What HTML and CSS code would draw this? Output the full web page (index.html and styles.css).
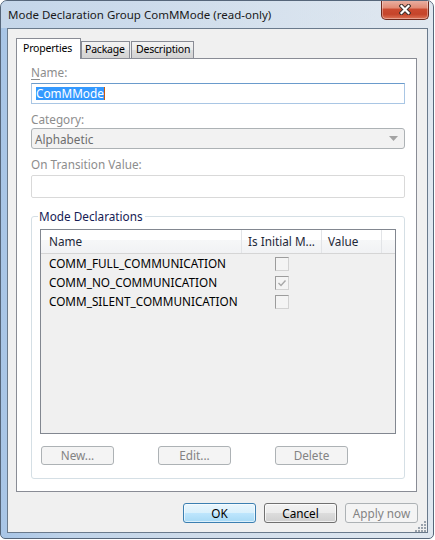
FILE: index.html
```html
<!DOCTYPE html>
<html>
<head>
<meta charset="utf-8">
<link rel="stylesheet" href="styles.css">
</head>
<body>
<div class="window">
  <div class="titlebar">
    <span class="title">Mode Declaration Group ComMMode (read-only)</span>
    <div class="close">
      <svg width="12" height="11" viewBox="0 0 12 11">
        <path d="M2.5 2 L9.5 9 M9.5 2 L2.5 9" stroke="#40302c" stroke-width="4.2" stroke-linecap="square" fill="none"/>
        <path d="M2.5 2 L9.5 9 M9.5 2 L2.5 9" stroke="#ffffff" stroke-width="2.2" stroke-linecap="square" fill="none"/>
      </svg>
    </div>
  </div>
  <div class="client">
    <div class="tabs">
      <div class="tab active">Properties</div>
      <div class="tab t-pkg">Package</div>
      <div class="tab t-desc">Description</div>
    </div>
    <div class="panel">
      <div class="lbl first"><u>N</u>ame:</div>
      <div class="input name-input"><span class="sel">ComMMode</span><span class="caret"></span></div>
      <div class="lbl">Category:</div>
      <div class="combo">
        <span class="combo-text">Alphabetic</span>
        <svg class="arrow" width="9" height="5" viewBox="0 0 9 5"><path d="M0 0 H9 L4.5 5 Z" fill="#a3a3a3"/></svg>
      </div>
      <div class="lbl">On Transition Value:</div>
      <div class="input trans"></div>
      <fieldset class="group">
        <legend>Mode Declarations</legend>
        <div class="list">
          <div class="lhead">
            <div class="c1">Name</div>
            <div class="c2">Is Initial M...</div>
            <div class="c3">Value</div>
            <div class="c4"></div>
          </div>
          <div class="row"><div class="c1">COMM_FULL_COMMUNICATION</div><div class="c2"><span class="chk"></span></div></div>
          <div class="row"><div class="c1">COMM_NO_COMMUNICATION</div><div class="c2"><span class="chk">
            <svg width="12" height="12" viewBox="0 0 12 12"><path d="M2.5 6 L5 8.5 L9.5 3.5" stroke="#a8a8a8" stroke-width="1.4" fill="none"/></svg>
          </span></div></div>
          <div class="row"><div class="c1">COMM_SILENT_COMMUNICATION</div><div class="c2"><span class="chk"></span></div></div>
        </div>
        <div class="btnrow">
          <button class="btn dis">New...</button>
          <button class="btn dis">Edit...</button>
          <button class="btn dis">Delete</button>
        </div>
      </fieldset>
    </div>
    <div class="footer">
      <button class="btn ok">OK</button>
      <button class="btn cancel">Cancel</button>
      <button class="btn dis">Apply now</button>
    </div>
    <svg class="grip" width="12" height="12" viewBox="0 0 12 12">
      <g fill="#9aa3ad">
        <rect x="9" y="1" width="2" height="2"/>
        <rect x="6" y="4" width="2" height="2"/><rect x="9" y="4" width="2" height="2"/>
        <rect x="3" y="7" width="2" height="2"/><rect x="6" y="7" width="2" height="2"/><rect x="9" y="7" width="2" height="2"/>
        <rect x="0" y="10" width="2" height="2"/><rect x="3" y="10" width="2" height="2"/><rect x="6" y="10" width="2" height="2"/><rect x="9" y="10" width="2" height="2"/>
      </g>
    </svg>
  </div>
</div>
</body>
</html>
```
FILE: styles.css
```css
* { box-sizing: border-box; }

body {
  margin: 0;
  background: #ffffff;
  font-family: "Noto Sans", "Open Sans", sans-serif;
  font-size: 11.75px;
  color: #000;
}

.window {
  width: 434px;
  height: 539px;
  border: 1px solid #56667a;
  border-radius: 7px 7px 5px 5px;
  background: linear-gradient(to right, #a8c5e6 0%, #bfd3e9 15%, #cfdcea 45%, #d9e3ee 75%, #dfe7f0 100%);
  display: flex;
  flex-direction: column;
  overflow: hidden;
}

.titlebar {
  height: 27px;
  flex: none;
  display: flex;
  align-items: flex-start;
  padding-left: 7px;
  background: linear-gradient(to right, rgba(200,216,234,0.9), rgba(214,226,238,0.6) 60%, rgba(225,232,240,0.5));
}

.title {
  margin-top: 6px;
  line-height: 15px;
  font-size: 11.5px;
  color: #1a1a1a;
  white-space: nowrap;
}

.close {
  margin-left: auto;
  margin-right: 4px;
  margin-top: -1px;
  width: 48px;
  height: 20px;
  border: 1px solid #6e2a1e;
  border-top: none;
  border-radius: 0 0 5px 5px;
  background: linear-gradient(#eab3a6 0%, #e28c76 40%, #cb4a30 50%, #c5442a 75%, #de7457 100%);
  display: flex;
  justify-content: center;
  align-items: center;
  box-shadow: inset 0 0 0 1px rgba(255,255,255,0.35);
}

.client {
  position: relative;
  margin: 0 5px 5px 6px;
  flex: 1;
  border: 1px solid #6a7a8c;
  background: #f0f0f0;
  padding: 9px 10px 0 8px;
  display: flex;
  flex-direction: column;
}

.tabs {
  display: flex;
  align-items: flex-end;
  height: 20px;
  flex: none;
  font-size: 10.5px;
  letter-spacing: -0.2px;
}

.tab {
  height: 17px;
  border: 1px solid #898c95;
  border-bottom: none;
  background: linear-gradient(#f3f3f3, #ebebeb 50%, #dddddd 50%, #d3d3d3);
  line-height: 15px;
  white-space: nowrap;
  color: #000;
}

.tab.active {
  height: 21px;
  width: 65px;
  margin-bottom: -1px;
  position: relative;
  z-index: 1;
  background: #ffffff;
  padding: 2px 0 0 6px;
}

.t-pkg { width: 49px; padding-left: 3px; }
.t-desc { min-width: 63px; padding: 0 2px 0 4px; margin-left: 1px; }

.panel {
  height: 434px;
  flex: none;
  border: 1px solid #898c95;
  background: #ffffff;
  padding: 6px 11px 0 14px;
  display: flex;
  flex-direction: column;
}

.lbl {
  line-height: 15px;
  color: #8d8d8d;
  margin-top: 8px;
}
.lbl.first { margin-top: 0; }
.lbl u { text-decoration-thickness: 1px; text-underline-offset: 2px; }

.input {
  margin-top: 3px;
  border: 1px solid #d9d9d9;
  background: #fff;
}

.name-input {
  height: 21px;
  border-color: #a9c6e4;
  border-top-color: #6a9bcc;
  display: flex;
  align-items: center;
  padding-left: 4px;
}

.sel {
  background: #3399ff;
  color: #fff;
  line-height: 13px;
}

.caret {
  width: 1px;
  height: 13px;
  background: #c65a10;
}

.combo {
  margin-top: 1px;
  height: 21px;
  border: 1px solid #adb2b5;
  border-radius: 3px;
  background: #f2f2f2;
  display: flex;
  align-items: center;
  padding: 0 3px 0 3px;
}

.combo-text { color: #6d6d6d; flex: 1; }
.arrow { margin-right: 3px; }

.trans { height: 23px; border-radius: 2px; }

.group {
  margin: 11px 0 0 0;
  border: 1px solid #d5dfe5;
  border-radius: 3px;
  padding: 5px 8px 13px 8px;
  min-width: 0;
}

.group legend {
  padding: 0 2px 0 1px;
  margin-left: -2px;
  line-height: 15px;
  color: #151c55;
}

.list {
  height: 205px;
  border: 1px solid #828790;
  background: #f0f0f0;
}

.lhead {
  display: flex;
  height: 24px;
  border-bottom: 1px solid #d5d5d5;
  background: linear-gradient(#ffffff 0%, #ffffff 45%, #f6f7f8 45%, #f1f2f4 100%);
  color: #1e2838;
  line-height: 23px;
}

.lhead > div { border-right: 1px solid #e2e4e7; white-space: nowrap; overflow: hidden; }
.lhead .c1 { width: 201px; padding-left: 8px; }
.lhead .c2 { width: 80px; padding-left: 6px; }
.lhead .c3 { width: 60px; padding-left: 6px; }
.lhead .c4 { flex: 1; border-right: none; }

.row {
  display: flex;
  height: 19px;
  line-height: 19px;
}
.row .c1 { width: 201px; padding-left: 8px; white-space: nowrap; }
.row .c2 {
  width: 80px;
  display: flex;
  justify-content: center;
  align-items: center;
}

.chk {
  width: 14px;
  height: 14px;
  border: 1px solid;
  border-color: #9c9c9c #d2d2d2 #d2d2d2 #9c9c9c;
  background: #f4f4f4;
  display: flex;
  align-items: center;
  justify-content: center;
}

.btnrow {
  display: flex;
  gap: 44px;
  margin-top: 12px;
  padding-left: 1px;
}

.btn {
  font-family: inherit;
  font-size: 11.75px;
  width: 73px;
  height: 19px;
  padding: 0;
  border-radius: 3px;
  border: 1px solid #adb2b5;
  background: #f4f4f4;
  color: #838383;
  line-height: 15px;
}

.footer {
  display: flex;
  justify-content: flex-end;
  gap: 8px;
  margin-top: 11px;
  margin-right: -1px;
}

.footer .btn { height: 20px; }

.ok {
  border-color: #3c7fb1;
  background: linear-gradient(#eaf6fd, #d9f0fc 50%, #bee6fd 50%, #a7d9f5);
  color: #000;
  box-shadow: inset 0 0 0 1px rgba(255,255,255,0.6);
}

.cancel {
  border-color: #707070;
  background: linear-gradient(#f2f2f2, #ebebeb 50%, #dddddd 50%, #cfcfcf);
  color: #000;
  box-shadow: inset 0 0 0 1px rgba(255,255,255,0.7);
}

.grip {
  position: absolute;
  right: 0;
  bottom: 0;
}
```
